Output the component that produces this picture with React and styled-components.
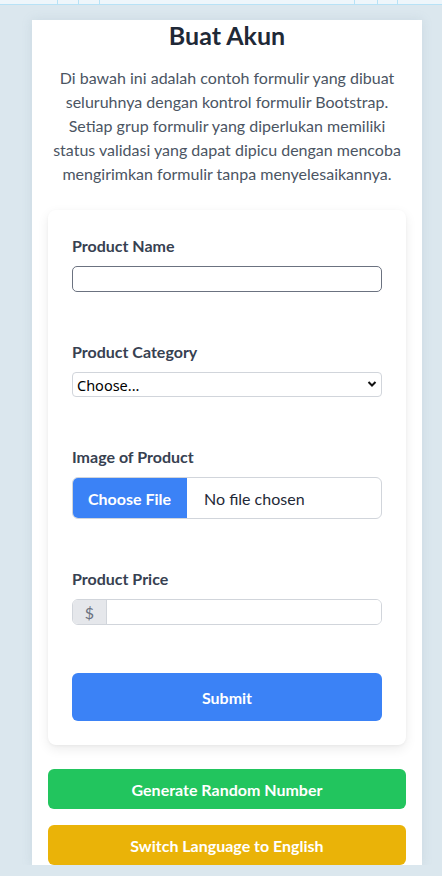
import React from "react";
import styled, { createGlobalStyle } from "styled-components";

const Global = createGlobalStyle`
  html, body { margin: 0; padding: 0; }
  body {
    background: #dbe7ee;
    font-family: Lato, "Noto Sans", sans-serif;
    color: #1f2937;
  }
  * { box-sizing: border-box; }
`;

const TopStrip = styled.div`
  height: 5px;
  background: #eef6fb;
  border-bottom: 1px solid #b8e2f6;
  display: flex;
  justify-content: space-between;
  padding: 0 44px 0 57px;
`;

const StripGroup = styled.div`
  display: flex;
`;

const StripCell = styled.span`
  display: block;
  width: ${(p) => p.$w}px;
  height: 4px;
  border-left: 1px solid #b8e2f6;
`;

const Page = styled.div`
  padding: 15px 20px 0 32px;
`;

const Container = styled.main`
  width: 390px;
  background: #fff;
  padding: 0 16px;
  box-shadow: 0 0 10px rgba(120, 150, 170, 0.18);
`;

const Title = styled.h1`
  margin: 0;
  font-size: 25px;
  line-height: 30px;
  font-weight: 700;
  text-align: center;
  color: #1f2937;
`;

const Lead = styled.p`
  margin: 16px 0 24px;
  font-size: 16px;
  line-height: 24px;
  text-align: center;
  color: #4b5563;
`;

const Card = styled.form`
  background: #fff;
  border-radius: 8px;
  box-shadow: 0 4px 12px rgba(0, 0, 0, 0.08), 0 1px 3px rgba(0, 0, 0, 0.04);
  padding: 24px;
  display: flex;
  flex-direction: column;
  gap: 48px;
`;

const Group = styled.div`
  display: flex;
  flex-direction: column;
  gap: 8px;
`;

const Label = styled.label`
  font-size: 16px;
  line-height: 24px;
  font-weight: 700;
  color: #374151;
`;

const TextInput = styled.input`
  height: 26px;
  width: 100%;
  border: 1px solid #6b7280;
  border-radius: 5px;
  padding: 0 8px;
  font: inherit;
  background: #fff;
`;

const SelectWrap = styled.div`
  position: relative;
`;

const Select = styled.select`
  appearance: none;
  -webkit-appearance: none;
  width: 100%;
  height: 25px;
  border: 1px solid #d1d5db;
  border-radius: 4px;
  background: #fff;
  padding: 0 24px 0 4px;
  font-family: "Noto Sans", sans-serif;
  font-size: 14.5px;
  color: #000;
`;

const Chevron = styled.svg`
  position: absolute;
  right: 5px;
  top: 8px;
  width: 10px;
  height: 8px;
  pointer-events: none;
`;

const FileBox = styled.div`
  display: flex;
  align-items: stretch;
  height: 42px;
  border: 1px solid #d1d5db;
  border-radius: 6px;
  overflow: hidden;
`;

const FileButton = styled.span`
  width: 115px;
  background: #3b82f6;
  color: #fff;
  font-weight: 700;
  font-size: 16px;
  display: flex;
  align-items: center;
  justify-content: center;
  margin: -1px 0 -1px -1px;
`;

const FileText = styled.span`
  display: flex;
  align-items: center;
  padding-left: 17px;
  font-size: 16px;
  color: #1f2937;
`;

const PriceBox = styled.div`
  display: flex;
  height: 26px;
  border: 1px solid #d1d5db;
  border-radius: 6px;
  overflow: hidden;
`;

const Addon = styled.span`
  width: 34px;
  background: #e5e7eb;
  border-right: 1px solid #d1d5db;
  color: #6b7280;
  display: flex;
  align-items: center;
  justify-content: center;
  font-size: 16px;
`;

const PriceInput = styled.input`
  flex: 1;
  border: none;
  outline: none;
  font: inherit;
`;

const Button = styled.button`
  width: 100%;
  height: ${(p) => p.$h}px;
  border: none;
  border-radius: 6px;
  background: ${(p) => p.$bg};
  color: #fff;
  font-family: inherit;
  font-weight: 700;
  font-size: 16px;
  cursor: pointer;
`;

const Actions = styled.div`
  display: flex;
  flex-direction: column;
  gap: 16px;
  margin-top: 24px;
`;

export default function App() {
  return (
    <>
      <Global />
      <TopStrip>
        <StripGroup>
          <StripCell $w={21} />
          <StripCell $w={21} />
          <StripCell $w={1} />
        </StripGroup>
        <StripGroup>
          <StripCell $w={23} />
          <StripCell $w={20} />
          <StripCell $w={1} />
        </StripGroup>
      </TopStrip>
      <Page>
        <Container>
          <Title>Buat Akun</Title>
          <Lead>
            Di bawah ini adalah contoh formulir yang dibuat seluruhnya dengan kontrol formulir
            Bootstrap. Setiap grup formulir yang diperlukan memiliki status validasi yang dapat
            dipicu dengan mencoba mengirimkan formulir tanpa menyelesaikannya.
          </Lead>
          <Card onSubmit={(e) => e.preventDefault()}>
            <Group>
              <Label htmlFor="pname">Product Name</Label>
              <TextInput id="pname" type="text" />
            </Group>
            <Group>
              <Label htmlFor="pcat">Product Category</Label>
              <SelectWrap>
                <Select id="pcat" defaultValue="">
                  <option value="">Choose...</option>
                </Select>
                <Chevron viewBox="0 0 10 8">
                  <path d="M1.5 2 L5 5.5 L8.5 2" fill="none" stroke="#111" strokeWidth="2" />
                </Chevron>
              </SelectWrap>
            </Group>
            <Group>
              <Label>Image of Product</Label>
              <FileBox>
                <FileButton>Choose File</FileButton>
                <FileText>No file chosen</FileText>
              </FileBox>
            </Group>
            <Group>
              <Label htmlFor="price">Product Price</Label>
              <PriceBox>
                <Addon>$</Addon>
                <PriceInput id="price" type="text" />
              </PriceBox>
            </Group>
            <Button type="submit" $h={48} $bg="#3b82f6">Submit</Button>
          </Card>
          <Actions>
            <Button type="button" $h={40} $bg="#22c55e">Generate Random Number</Button>
            <Button type="button" $h={40} $bg="#eab308">Switch Language to English</Button>
          </Actions>
        </Container>
      </Page>
    </>
  );
}
